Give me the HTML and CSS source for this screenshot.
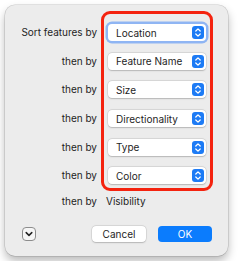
FILE: index.html
```html
<!DOCTYPE html>
<html lang="en">
<head>
  <meta charset="UTF-8" />
  <title>Sort Features</title>
  <link rel="stylesheet" href="styles.css">
</head>
<body>
  <div class="window">
    <div class="sort-area">
      <div class="labels">
        <div class="label">Sort features by</div>
        <div class="label">then by</div>
        <div class="label">then by</div>
        <div class="label">then by</div>
        <div class="label">then by</div>
        <div class="label">then by</div>
      </div>
      <div class="fields">
        <div class="popup focused"><span>Location</span><svg class="stepper" viewBox="0 0 12 13"><rect width="12" height="13" rx="3" fill="#1d7bf5"/><path d="M3.8 5 L6 2.9 L8.2 5 M3.8 8 L6 10.1 L8.2 8" fill="none" stroke="#fff" stroke-width="1.3" stroke-linecap="round" stroke-linejoin="round"/></svg></div>
        <div class="popup"><span>Feature Name</span><svg class="stepper" viewBox="0 0 12 13"><rect width="12" height="13" rx="3" fill="#1d7bf5"/><path d="M3.8 5 L6 2.9 L8.2 5 M3.8 8 L6 10.1 L8.2 8" fill="none" stroke="#fff" stroke-width="1.3" stroke-linecap="round" stroke-linejoin="round"/></svg></div>
        <div class="popup"><span>Size</span><svg class="stepper" viewBox="0 0 12 13"><rect width="12" height="13" rx="3" fill="#1d7bf5"/><path d="M3.8 5 L6 2.9 L8.2 5 M3.8 8 L6 10.1 L8.2 8" fill="none" stroke="#fff" stroke-width="1.3" stroke-linecap="round" stroke-linejoin="round"/></svg></div>
        <div class="popup"><span>Directionality</span><svg class="stepper" viewBox="0 0 12 13"><rect width="12" height="13" rx="3" fill="#1d7bf5"/><path d="M3.8 5 L6 2.9 L8.2 5 M3.8 8 L6 10.1 L8.2 8" fill="none" stroke="#fff" stroke-width="1.3" stroke-linecap="round" stroke-linejoin="round"/></svg></div>
        <div class="popup"><span>Type</span><svg class="stepper" viewBox="0 0 12 13"><rect width="12" height="13" rx="3" fill="#1d7bf5"/><path d="M3.8 5 L6 2.9 L8.2 5 M3.8 8 L6 10.1 L8.2 8" fill="none" stroke="#fff" stroke-width="1.3" stroke-linecap="round" stroke-linejoin="round"/></svg></div>
        <div class="popup"><span>Color</span><svg class="stepper" viewBox="0 0 12 13"><rect width="12" height="13" rx="3" fill="#1d7bf5"/><path d="M3.8 5 L6 2.9 L8.2 5 M3.8 8 L6 10.1 L8.2 8" fill="none" stroke="#fff" stroke-width="1.3" stroke-linecap="round" stroke-linejoin="round"/></svg></div>
      </div>
    </div>

    <div class="last-row">
      <div class="label">then by</div>
      <div class="last-value">Visibility</div>
    </div>

    <div class="actions">
      <button class="disclosure">
        <svg width="8" height="6" viewBox="0 0 8 6"><path d="M1.2 1.6 L4 4.4 L6.8 1.6" fill="none" stroke="#222" stroke-width="1.5" stroke-linecap="round" stroke-linejoin="round"/></svg>
      </button>
      <div class="spacer"></div>
      <button class="btn">Cancel</button>
      <button class="btn primary">OK</button>
    </div>
  </div>
</body>
</html>
```

FILE: styles.css
```css
body {
  margin: 0;
  background: #ffffff;
  font-family: Inter, "Liberation Sans", sans-serif;
  font-size: 10px;
  color: #1e1e1e;
}

.window {
  margin: 5px;
  width: 223px;
  height: 251px;
  box-sizing: border-box;
  background: #ececec;
  border-radius: 10px;
  box-shadow: 0 0 0 0.5px rgba(0,0,0,0.18), 0 5px 10px rgba(0,0,0,0.28);
  padding-top: 6px;
}

.sort-area {
  display: flex;
  align-items: flex-start;
}

.labels {
  width: 92px;
  margin-top: 13px;
  display: flex;
  flex-direction: column;
  gap: 11.7px;
}

.label {
  height: 17px;
  line-height: 17px;
  text-align: right;
}

.fields {
  margin-left: 4px;
  width: 112px;
  box-sizing: border-box;
  border: 3px solid #f4230f;
  border-radius: 9px;
  padding: 10px 4px 3.5px 4px;
  display: flex;
  flex-direction: column;
  gap: 11.7px;
}

.popup {
  height: 17px;
  background: #ffffff;
  border-radius: 4px;
  box-shadow: 0 0 0 0.5px rgba(0,0,0,0.12), 0 0.5px 1.5px rgba(0,0,0,0.18);
  display: flex;
  align-items: center;
  padding-left: 8px;
  padding-right: 2px;
}

.popup span {
  flex: 1;
}

.popup.focused {
  box-shadow: 0 0 0 2.5px #8fb5f3;
}

.stepper {
  width: 12px;
  height: 13px;
}

.last-row {
  display: flex;
  margin-top: 2.5px;
}

.last-row .label {
  width: 92px;
}

.last-value {
  margin-left: 9px;
  line-height: 17px;
}

.actions {
  display: flex;
  align-items: center;
  gap: 12px;
  margin-top: 16px;
  padding: 0 16px 0 17px;
}

.disclosure {
  width: 14px;
  height: 14px;
  padding: 0;
  border: 1px solid #8d8d8d;
  border-radius: 4px;
  background: #f6f6f6;
  display: flex;
  align-items: center;
  justify-content: center;
}

.spacer {
  flex: 1;
}

.btn {
  width: 54px;
  height: 16px;
  padding: 0;
  border: none;
  border-radius: 4px;
  background: #ffffff;
  box-shadow: 0 0 0 0.5px rgba(0,0,0,0.12), 0 0.5px 1.5px rgba(0,0,0,0.18);
  font-family: Inter, "Liberation Sans", sans-serif;
  font-size: 10px;
  color: #1e1e1e;
}

.btn.primary {
  background: #0b7cfd;
  color: #ffffff;
  box-shadow: none;
}
```
